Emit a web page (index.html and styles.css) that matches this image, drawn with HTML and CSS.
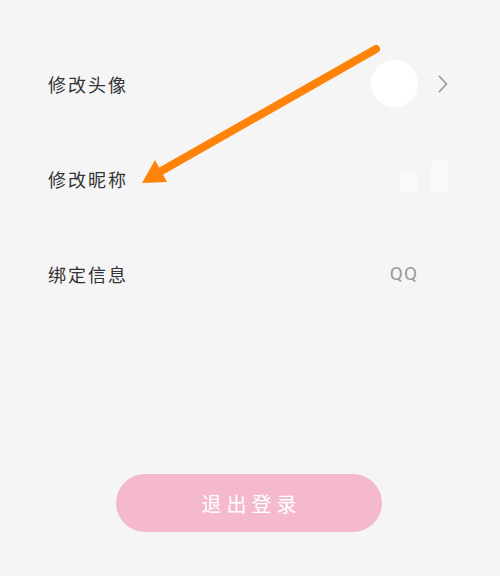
FILE: index.html
```html
<!DOCTYPE html>
<html lang="zh">
<head>
<meta charset="utf-8">
<link rel="stylesheet" href="styles.css">
</head>
<body>
<div class="page">
  <div class="list">
    <div class="row">
      <span class="label">修改头像</span>
      <div class="value"><div class="avatar"></div></div>
      <svg class="chev" viewBox="0 0 10 18"><path d="M1.5 1.5 L8.5 9 L1.5 16.5" fill="none" stroke="#9a9a9a" stroke-width="1.8" stroke-linecap="round" stroke-linejoin="round"/></svg>
    </div>
    <div class="row">
      <span class="label">修改昵称</span>
      <div class="value blur"><span class="b1"></span><span class="b2"></span></div>
      <span class="chev-space"></span>
    </div>
    <div class="row">
      <span class="label">绑定信息</span>
      <div class="value"><span class="qq">QQ</span></div>
      <span class="chev-space"></span>
    </div>
  </div>
  <div class="btn-wrap">
    <button class="logout">退出登录</button>
  </div>
  <svg class="arrow" viewBox="0 0 500 576" width="500" height="576">
    <line x1="376" y1="49" x2="156" y2="174" stroke="#ff8308" stroke-width="8" stroke-linecap="round"/>
    <polygon points="142,183 155,160 167,182" fill="#ff8308"/>
  </svg>
</div>
</body>
</html>
```
FILE: styles.css
```css
html, body {
  margin: 0;
  padding: 0;
  background: #f5f5f5;
}
.page {
  position: relative;
  width: 500px;
  height: 576px;
  font-family: "Noto Sans CJK SC", "Noto Sans", sans-serif;
}
.list {
  padding-top: 36px;
}
.row {
  height: 95px;
  display: flex;
  align-items: center;
  padding: 0 52px 0 48px;
}
.label {
  flex: 1;
  font-size: 18px;
  letter-spacing: 2px;
  color: #333333;
}
.value {
  display: flex;
  align-items: center;
  justify-content: flex-end;
}
.avatar {
  width: 47px;
  height: 47px;
  border-radius: 50%;
  background: #ffffff;
}
.chev {
  width: 10px;
  height: 18px;
  margin-left: 20px;
}
.chev-space {
  width: 10px;
  margin-left: 20px;
}
.qq {
  font-family: "Roboto", "Noto Sans", sans-serif;
  font-size: 19px;
  color: #9a9a9a;
  letter-spacing: 1px;
}
.blur {
  align-items: flex-start;
  height: 40px;
  margin-right: -30px;
}
.b1 {
  width: 17px;
  height: 19px;
  background: #fafafa;
  border-radius: 3px;
  margin-right: 14px;
  margin-top: 14px;
}
.b2 {
  width: 17px;
  height: 33px;
  background: #fafafa;
  border-radius: 6px 6px 2px 2px;
}
.btn-wrap {
  display: flex;
  justify-content: center;
  padding-top: 153px;
}
.logout {
  width: 266px;
  height: 58px;
  border: none;
  border-radius: 29px;
  background: #f5b9cc;
  color: #ffffff;
  font-family: "Noto Sans CJK SC", sans-serif;
  font-size: 20px;
  letter-spacing: 5px;
  padding: 0 0 0 5px;
  margin-left: -2px;
}
.arrow {
  position: absolute;
  left: 0;
  top: 0;
  pointer-events: none;
}
```
